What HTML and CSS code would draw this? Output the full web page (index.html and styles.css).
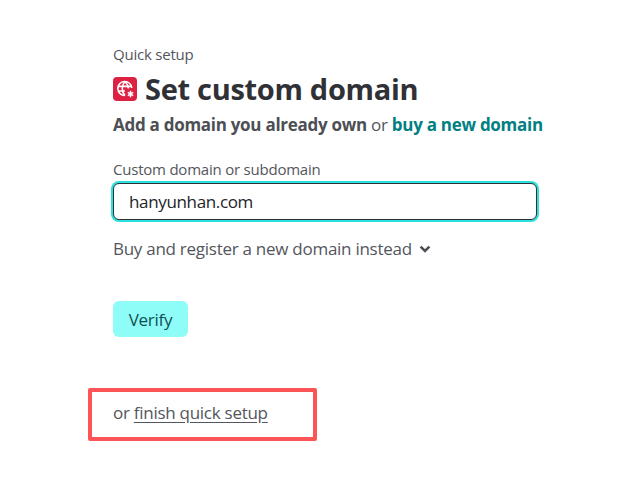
FILE: index.html
```html
<!DOCTYPE html>
<html lang="en">
<head>
<meta charset="utf-8">
<title>Set custom domain</title>
<link rel="stylesheet" href="styles.css">
</head>
<body>
<main class="page">
  <p class="eyebrow">Quick setup</p>
  <h1 class="title">
    <span class="site-icon">
      <svg viewBox="0 0 24 24" width="24" height="24" fill="none" stroke="#fff" stroke-width="1.6">
        <path d="M12 18.5A7 7 0 1 1 18.8 11"/>
        <path d="M12 4.5c-3.6 3.8-3.6 10 0 14M12 4.5c2.3 2.3 3.3 4.8 3.4 7"/>
        <path d="M5.4 9.4h13M5.4 14h6.6"/>
        <path d="M17.5 13.8v6.4M14.8 15.4l5.4 3.2M20.2 15.4l-5.4 3.2" stroke-width="1.5"/>
      </svg>
    </span>
    <span>Set custom domain</span>
  </h1>
  <p class="lead"><strong>Add a domain you already own</strong> or <a class="lead-link" href="#">buy a new domain</a></p>
  <form class="form">
    <label class="label" for="domain">Custom domain or subdomain</label>
    <input class="input" id="domain" type="text" value="hanyunhan.com">
    <p class="expander">Buy and register a new domain instead
      <svg class="chevron" viewBox="0 0 12 12" width="12" height="12" fill="none" stroke="#4c4f54" stroke-width="2.6"><path d="M1.6 3.6 6 8l4.4-4.4"/></svg>
    </p>
    <button class="verify" type="button">Verify</button>
  </form>
  <p class="finish">or <a class="finish-link" href="#">finish quick setup</a></p>
</main>
<div class="annotation"></div>
</body>
</html>
```
FILE: styles.css
```css
* { box-sizing: border-box; }
html, body { margin: 0; background: #fff; }
body {
  height: 480px;
  overflow: hidden;
  position: relative;
  font-family: "Open Sans", "Noto Sans", sans-serif;
  color: #53565c;
}
.page { padding: 44px 0 0 113px; display: flex; flex-direction: column; align-items: flex-start; }
.eyebrow { margin: 0; font-size: 15px; line-height: 20px; letter-spacing: -0.22px; }
.title {
  margin: 5px 0 0;
  display: flex;
  align-items: center;
  gap: 8px;
  font-size: 29px;
  line-height: 40px;
  font-weight: 700;
  color: #2f3136;
  letter-spacing: -0.3px;
}
.site-icon {
  width: 24px;
  height: 24px;
  border-radius: 4px;
  background: #dc2143;
  display: flex;
}
.lead { margin: 5px 0 0; font-size: 17px; line-height: 22px; letter-spacing: -0.28px; }
.lead strong { font-weight: 700; color: #4c4f54; }
.lead-link { color: #017f83; font-weight: 700; text-decoration: none; }
.form { margin-top: 23px; display: flex; flex-direction: column; align-items: flex-start; }
.label { font-size: 15px; line-height: 20px; letter-spacing: -0.22px; }
.input {
  margin-top: 4px;
  width: 424px;
  height: 37px;
  padding: 0 15px;
  border: 1px solid #2f3136;
  border-radius: 6px;
  box-shadow: 0 0 0 2px #2ae0dc;
  font: 400 17px "Open Sans", sans-serif;
  letter-spacing: -0.35px;
  color: #23252a;
  outline: none;
  background: #fff;
}
.expander {
  margin: 17px 0 0;
  font-size: 17px;
  line-height: 24px;
  letter-spacing: -0.27px;
  display: flex;
  align-items: center;
  gap: 7px;
}
.verify {
  margin-top: 40px;
  width: 75px;
  height: 36px;
  padding: 0;
  border: 0;
  border-radius: 6px;
  background: #8ffdf7;
  color: #0f4f55;
  font: 400 17px "Open Sans", sans-serif;
  letter-spacing: -0.25px;
}
.finish { margin: 64px 0 0; font-size: 17px; line-height: 24px; letter-spacing: -0.27px; }
.finish-link { color: #53565c; text-decoration: underline; text-underline-offset: 3px; }
.annotation {
  position: absolute;
  left: 88px;
  top: 388px;
  width: 229px;
  height: 53px;
  border: 4px solid #fd5457;
  border-radius: 2px;
}
```
